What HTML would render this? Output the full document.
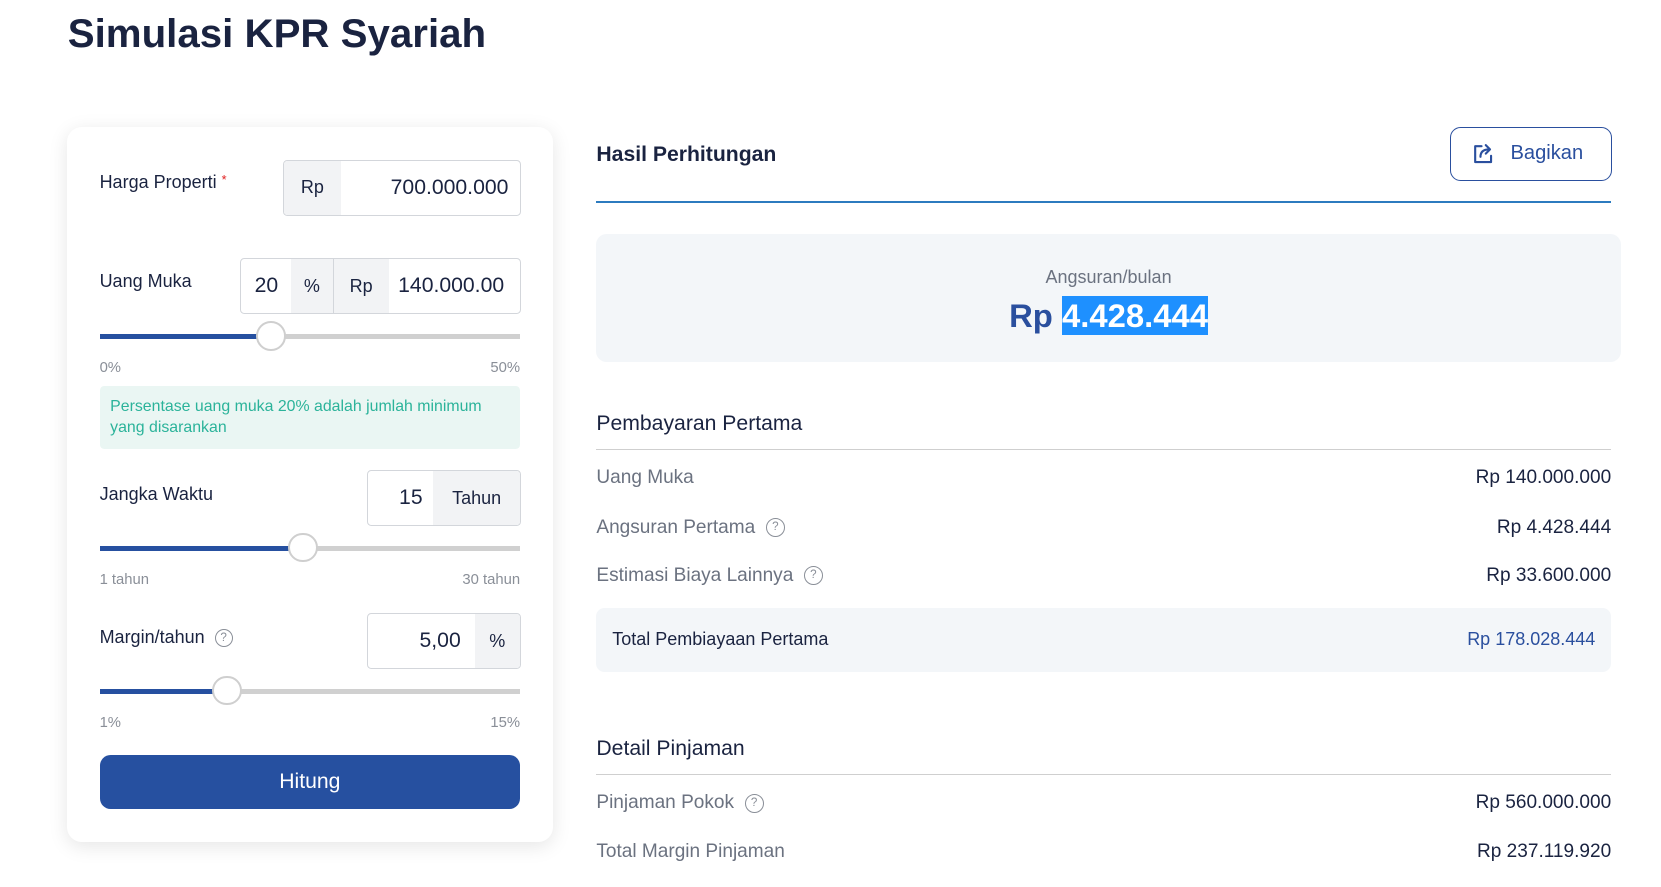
<!DOCTYPE html>
<html><head><meta charset="utf-8"><style>
html,body{margin:0;padding:0;background:#fff;overflow:hidden}
body{width:1661px;height:887px}
#z{zoom:1.0593;position:relative;width:1568px;height:838px;font-family:"Liberation Sans",sans-serif;color:#1a2340}
.a{position:absolute;white-space:nowrap}
.card{position:absolute;left:63px;top:120px;width:459px;height:675px;border-radius:14px;background:#fff;box-shadow:0 4px 18px rgba(0,0,0,.10)}
.lbl{font-size:17px;color:#1a2340}
.box{position:absolute;border:1px solid #d3d6db;border-radius:4px;overflow:hidden;display:flex;background:#fff;font-size:20px;color:#1a2340}
.box div{display:flex;align-items:center;height:100%}
.g{background:#f2f3f5;font-size:17px}
.track{position:absolute;height:5px;background:#d0d0d0;left:94px;width:397px}
.fill{position:absolute;height:5px;background:#2650a0;left:94px}
.th{position:absolute;width:28px;height:28px;border-radius:50%;background:#fff;border:2px solid #cfcfcf;box-sizing:border-box}
.sm{font-size:14px;color:#8a8f98}
.q{display:inline-block;width:15px;height:15px;border:1.3px solid #8a8f98;border-radius:50%;font-size:11px;text-align:center;color:#8a8f98;vertical-align:middle;box-sizing:border-box;line-height:13px}
.rl{font-size:18px;color:#6b7280}
.rv{font-size:18px;color:#1a2340;right:47px}
</style></head><body><div id="z">
<div class="a" style="left:64px;top:10px;font-size:38px;font-weight:bold;color:#1a2340">Simulasi KPR Syariah</div>

<div class="card"></div>
<div class="a lbl" style="left:94px;top:162px">Harga Properti <span style="color:#e02020;font-size:12px;vertical-align:top">*</span></div>
<div class="box" style="left:267px;top:151px;width:223px;height:51px"><div class="g" style="width:54px;justify-content:center">Rp</div><div style="flex:1;justify-content:flex-end;padding-right:11px">700.000.000</div></div>

<div class="a lbl" style="left:94px;top:256px">Uang Muka</div>
<div class="box" style="left:227px;top:244px;width:263px;height:51px"><div style="width:47px;justify-content:center">20</div><div class="g" style="width:39px;justify-content:center;border-right:1px solid #d3d6db">%</div><div class="g" style="width:52px;justify-content:center">Rp</div><div style="flex:1;padding-left:9px">140.000.00</div></div>
<div class="track" style="top:315px"></div><div class="fill" style="top:315px;width:162px"></div><div class="th" style="left:242px;top:303px"></div>
<div class="a sm" style="left:94px;top:340px">0%</div><div class="a sm" style="right:1077px;top:340px">50%</div>
<div class="a" style="left:94px;top:364px;width:397px;height:60px;background:#eaf6f3;border-radius:4px"></div>
<div class="a" style="left:104px;top:374px;font-size:15px;color:#2bb39a;line-height:20px">Persentase uang muka 20% adalah jumlah minimum<br>yang disarankan</div>

<div class="a lbl" style="left:94px;top:457px">Jangka Waktu</div>
<div class="box" style="left:346px;top:444px;width:144px;height:51px"><div style="width:62px;justify-content:flex-end;padding-right:10px;box-sizing:border-box">15</div><div class="g" style="flex:1;justify-content:center">Tahun</div></div>
<div class="track" style="top:515px"></div><div class="fill" style="top:515px;width:192px"></div><div class="th" style="left:272px;top:503px"></div>
<div class="a sm" style="left:94px;top:540px">1 tahun</div><div class="a sm" style="right:1077px;top:540px">30 tahun</div>

<div class="a lbl" style="left:94px;top:592px">Margin/tahun &nbsp;<span class="q" style="width:17px;height:17px;line-height:15px">?</span></div>
<div class="box" style="left:346px;top:579px;width:144px;height:51px"><div style="width:101px;justify-content:flex-end;padding-right:13px;box-sizing:border-box">5,00</div><div class="g" style="flex:1;justify-content:center">%</div></div>
<div class="track" style="top:650px"></div><div class="fill" style="top:650px;width:120px"></div><div class="th" style="left:200px;top:638px"></div>
<div class="a sm" style="left:94px;top:675px">1%</div><div class="a sm" style="right:1077px;top:675px">15%</div>
<div class="a" style="left:94px;top:713px;width:397px;height:51px;background:#2650a0;border-radius:10px;color:#fff;font-size:20px;text-align:center;line-height:51px">Hitung</div>

<div class="a" style="left:563px;top:135px;font-size:20px;font-weight:bold">Hasil Perhitungan</div>
<div class="a" style="left:1369px;top:120px;width:151px;height:49px;border:1px solid #2a4f9e;border-radius:10px;color:#2a4f9e;font-size:19px;line-height:49px">
<svg style="position:absolute;left:20px;top:13px" width="22" height="22" viewBox="0 0 22 22" fill="none" stroke="#2a4f9e" stroke-width="2" stroke-linecap="round" stroke-linejoin="round"><path d="M9 4H3v15h15v-6"/><path d="M8 14c0-5 3-7 8-7"/><path d="M13 3l4 4-4 4"/></svg>
<span style="position:absolute;left:56px">Bagikan</span></div>
<div class="a" style="left:563px;top:190px;width:958px;height:2px;background:#2c7bbf"></div>
<div class="a" style="left:563px;top:221px;width:967px;height:121px;background:#f3f6f9;border-radius:10px"></div>
<div class="a" style="left:563px;width:967px;text-align:center;top:252px;font-size:17px;color:#6b7280">Angsuran/bulan</div>
<div class="a" style="left:563px;width:967px;text-align:center;top:280px;font-size:31px;font-weight:bold;color:#2a4f9e">Rp <span style="background:#1e90ff;color:#fff;padding:1px 0">4.428.444</span></div>

<div class="a" style="left:563px;top:389px;font-size:20px">Pembayaran Pertama</div>
<div class="a" style="left:563px;top:424px;width:958px;height:1px;background:#cfcfcf"></div>
<div class="a rl" style="left:563px;top:441px">Uang Muka</div><div class="a rv" style="top:441px">Rp 140.000.000</div>
<div class="a rl" style="left:563px;top:488px">Angsuran Pertama &nbsp;<span class="q" style="width:18px;height:18px;line-height:16px">?</span></div><div class="a rv" style="top:488px">Rp 4.428.444</div>
<div class="a rl" style="left:563px;top:533px">Estimasi Biaya Lainnya &nbsp;<span class="q" style="width:18px;height:18px;line-height:16px">?</span></div><div class="a rv" style="top:533px">Rp 33.600.000</div>
<div class="a" style="left:563px;top:574px;width:958px;height:60px;background:#f3f6f9;border-radius:8px"></div>
<div class="a" style="left:578px;top:594px;font-size:17px">Total Pembiayaan Pertama</div>
<div class="a" style="right:62px;top:594px;font-size:17px;color:#2a4f9e">Rp 178.028.444</div>

<div class="a" style="left:563px;top:696px;font-size:20px">Detail Pinjaman</div>
<div class="a" style="left:563px;top:731px;width:958px;height:1px;background:#cfcfcf"></div>
<div class="a rl" style="left:563px;top:748px">Pinjaman Pokok &nbsp;<span class="q" style="width:18px;height:18px;line-height:16px">?</span></div><div class="a rv" style="top:748px">Rp 560.000.000</div>
<div class="a rl" style="left:563px;top:794px">Total Margin Pinjaman</div><div class="a rv" style="top:794px">Rp 237.119.920</div>
</div></body></html>
